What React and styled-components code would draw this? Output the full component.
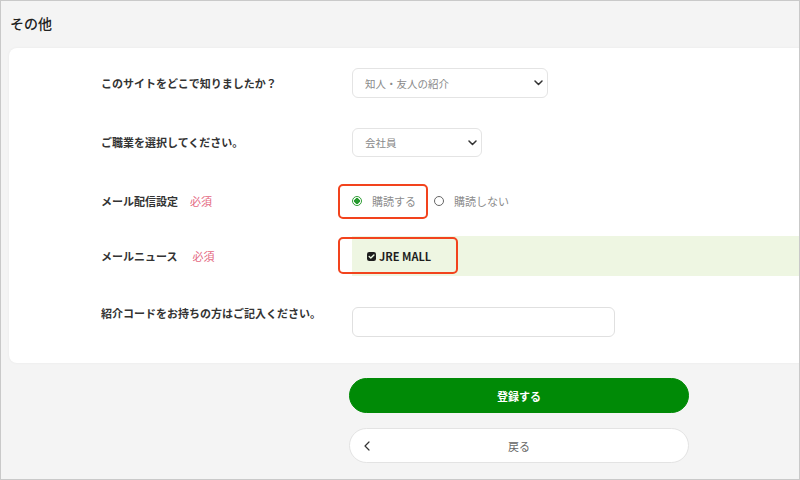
import React from "react";
import styled, { createGlobalStyle } from "styled-components";

const Global = createGlobalStyle`
  html, body { margin: 0; padding: 0; }
  body { font-family: "Noto Sans CJK JP", "Noto Sans", sans-serif; }
  * { box-sizing: border-box; }
`;

const Page = styled.div`
  width: 800px;
  height: 480px;
  border: 1px solid #c9c9c9;
  background: #f4f4f4;
  overflow: hidden;
  display: flex;
  flex-direction: column;
`;

const Header = styled.h1`
  margin: 0;
  height: 47px;
  padding: 0 0 4px 9px;
  display: flex;
  align-items: center;
  font-size: 14px;
  font-weight: 500;
  color: #222;
`;

const Card = styled.section`
  margin: 0 -12px 0 8px;
  background: #fff;
  border-radius: 8px;
  box-shadow: 0 0 3px rgba(0, 0, 0, 0.05);
  padding: 20px 0 26px 92px;
  display: flex;
  flex-direction: column;
`;

const Row = styled.div`
  display: flex;
  align-items: ${(p) => (p.$top ? "flex-start" : "center")};
  height: ${(p) => p.$h}px;
  margin-top: ${(p) => p.$mt || 0}px;
`;

const Label = styled.div`
  width: 251px;
  flex: none;
  font-size: 11px;
  font-weight: 700;
  color: #333;
  line-height: 13px;
  display: flex;
  align-items: center;
  white-space: nowrap;
`;

const Required = styled.span`
  margin-left: ${(p) => p.$gap}px;
  font-weight: 400;
  color: #e4687f;
`;

const SelectBox = styled.div`
  width: ${(p) => p.$w}px;
  height: ${(p) => p.$h}px;
  border: 1px solid #e4e4e4;
  border-radius: 6px;
  background: #fff;
  display: flex;
  align-items: center;
  justify-content: space-between;
  padding: 0 4px 0 12px;
  font-size: 10.5px;
  color: #8a8a8a;
`;

const Chevron = () => (
  <svg width="9" height="6" viewBox="0 0 9 6">
    <path d="M1 1 L4.5 4.5 L8 1" fill="none" stroke="#333" strokeWidth="1.5" strokeLinecap="round" strokeLinejoin="round" />
  </svg>
);

const RadioGroup = styled.div`
  display: flex;
  align-items: center;
`;

const Option = styled.label`
  position: relative;
  display: flex;
  align-items: center;
  gap: 10px;
  margin-right: 18px;
  font-size: 11px;
  color: #8c8c8c;
  line-height: 17px;
`;

const Annotation = styled.span`
  position: absolute;
  left: ${(p) => p.$l}px;
  top: ${(p) => p.$t}px;
  width: ${(p) => p.$w}px;
  height: ${(p) => p.$h}px;
  border: 2px solid #f2431d;
  border-radius: 5px;
  pointer-events: none;
`;

const RadioDot = styled.span`
  width: 10px;
  height: 10px;
  border-radius: 50%;
  border: 1px solid ${(p) => (p.$on ? "#2f9e35" : "#666")};
  background: ${(p) => (p.$on ? "radial-gradient(circle, #279a2e 0 2.6px, #fff 3px)" : "#fff")};
  flex: none;
`;

const Band = styled.div`
  position: relative;
  flex: 1;
  height: 100%;
  background: #eef6e2;
  display: flex;
  align-items: center;
  padding-left: 15px;
  gap: 3px;
  font-size: 11px;
  font-weight: 700;
  color: #1e1e1e;
`;

const Check = () => (
  <svg width="9" height="9" viewBox="0 0 9 9">
    <rect x="0" y="0" width="9" height="9" rx="2.2" fill="#1d1d1d" />
    <path d="M2.2 4.6 L3.8 6.1 L6.9 2.9" fill="none" stroke="#e9f7e0" strokeWidth="1.4" strokeLinecap="round" strokeLinejoin="round" />
  </svg>
);

const TextInput = styled.input`
  width: 263px;
  height: 30px;
  border: 1px solid #e0e0e0;
  border-radius: 6px;
  background: #fff;
  outline: none;
  font-family: inherit;
`;

const Actions = styled.div`
  display: flex;
  flex-direction: column;
  gap: 15px;
  padding: 15px 0 0 348px;
`;

const Button = styled.button`
  position: relative;
  width: 340px;
  height: 35px;
  border-radius: 18px;
  font-family: inherit;
  font-size: 11px;
  font-weight: ${(p) => (p.$primary ? 700 : 400)};
  color: ${(p) => (p.$primary ? "#fff" : "#666")};
  background: ${(p) => (p.$primary ? "#008a06" : "#fff")};
  border: 1px solid ${(p) => (p.$primary ? "#008a06" : "#e3e3e3")};
  display: flex;
  align-items: center;
  justify-content: center;
  padding: 0;
`;

const BackIcon = styled.span`
  position: absolute;
  left: 14px;
  top: 50%;
  transform: translateY(-50%);
  display: flex;
`;

export default function App() {
  return (
    <>
      <Global />
      <Page>
        <Header>その他</Header>
        <Card>
          <Row $h={30}>
            <Label>このサイトをどこで知りましたか？</Label>
            <SelectBox $w={196} $h={30}>
              知人・友人の紹介
              <Chevron />
            </SelectBox>
          </Row>
          <Row $h={29} $mt={30}>
            <Label>ご職業を選択してください。</Label>
            <SelectBox $w={130} $h={29}>
              会社員
              <Chevron />
            </SelectBox>
          </Row>
          <Row $h={30} $mt={29}>
            <Label>
              メール配信設定<Required $gap={12}>必須</Required>
            </Label>
            <RadioGroup>
              <Option>
                <RadioDot $on />
                購読する
                <Annotation $l={-14} $t={-9} $w={90} $h={35} />
              </Option>
              <Option>
                <RadioDot />
                購読しない
              </Option>
            </RadioGroup>
          </Row>
          <Row $h={40} $mt={20}>
            <Label>
              メールニュース<Required $gap={15}>必須</Required>
            </Label>
            <Band>
              <Check />
              JRE MALL
              <Annotation $l={-14} $t={1} $w={120} $h={37} />
            </Band>
          </Row>
          <Row $h={30} $mt={31} $top>
            <Label>紹介コードをお持ちの方はご記入ください。</Label>
            <TextInput />
          </Row>
        </Card>
        <Actions>
          <Button $primary>登録する</Button>
          <Button>
            <BackIcon>
              <svg width="6" height="10" viewBox="0 0 6 10">
                <path d="M5 1 L1 5 L5 9" fill="none" stroke="#333" strokeWidth="1.2" strokeLinecap="round" strokeLinejoin="round" />
              </svg>
            </BackIcon>
            戻る
          </Button>
        </Actions>
      </Page>
    </>
  );
}
